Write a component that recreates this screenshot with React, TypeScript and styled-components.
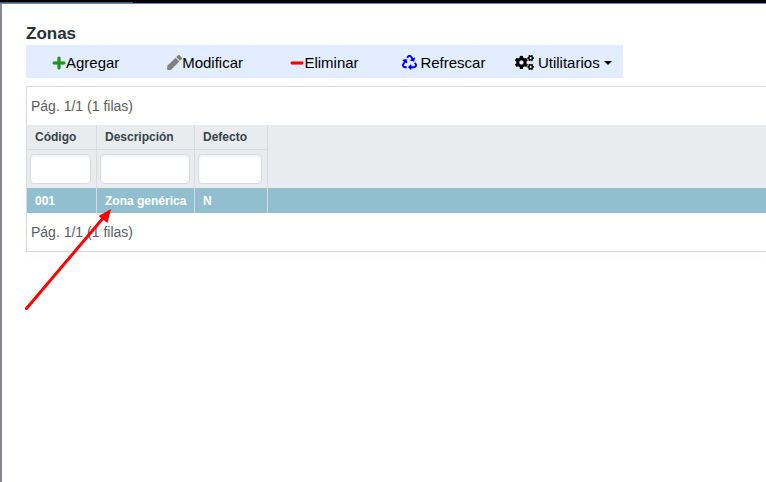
import React from "react";
import styled, { createGlobalStyle } from "styled-components";
import { FaPlus, FaPen, FaMinus, FaRecycle, FaCogs } from "react-icons/fa";

const GlobalStyle = createGlobalStyle`
  * { box-sizing: border-box; }
  body {
    margin: 0;
    background: #fff;
    font-family: "Liberation Sans", Arial, sans-serif;
    overflow-x: hidden;
  }
`;

const Frame = styled.div`
  min-height: 100vh;
  display: flex;
  flex-direction: column;
`;

const TopBar = styled.div`
  display: flex;
  align-items: flex-end;
  height: 4px;
  background: #000;
  border-bottom: 1px solid #5b87b5;
`;

const TopTab = styled.div`
  width: 133px;
  height: 1px;
  background: #555;
`;

const Page = styled.main`
  flex: 1;
  padding: 19px 0 0 24px;
  border-left: 2px solid #8a8494;
`;

const Title = styled.h1`
  margin: 0;
  font-size: 17px;
  line-height: 22px;
  font-weight: bold;
  color: #263238;
`;

const Toolbar = styled.nav`
  display: grid;
  grid-template-columns: repeat(5, 1fr);
  width: 100%;
  max-width: 597px;
  background: #e2eeff;
`;

const ToolButton = styled.button<{ $gap?: number }>`
  display: flex;
  align-items: center;
  justify-content: center;
  gap: ${(p) => p.$gap ?? 0}px;
  height: 33px;
  padding: 2px 0 0;
  border: 0;
  background: none;
  font: 15px "Liberation Sans", Arial, sans-serif;
  color: #000;
  white-space: nowrap;
`;

const Icon = styled.span<{ $color: string }>`
  display: flex;
  color: ${(p) => p.$color};
`;

const Panel = styled.section`
  margin-top: 8px;
  border: 1px solid #d8dcde;
  border-right: 0;
  box-shadow: 0 4px 12px rgba(0, 0, 0, 0.02);
`;

const Pager = styled.p`
  margin: 0;
  padding-left: 4px;
  font-size: 14px;
  line-height: 38px;
  color: #595d60;
`;

const Table = styled.table`
  width: 100%;
  table-layout: fixed;
  border-collapse: separate;
  border-spacing: 0;
  font-size: 12px;
`;

const Col = styled.col<{ $width?: number }>`
  width: ${(p) => (p.$width ? `${p.$width}px` : "auto")};
`;

const HeadRow = styled.tr`
  height: 25px;
  background: #e8ecef;
`;

const FilterRow = styled.tr`
  height: 38px;
  background: #e8ecef;
`;

const DataRow = styled.tr`
  height: 25px;
  background: #91bfd0;
`;

const HeadCell = styled.th`
  padding: 0 8px;
  border-right: 1px solid #d7dcdf;
  border-bottom: 1px solid #d7dcdf;
  text-align: left;
  color: #37434a;
`;

const FilterCell = styled.td<{ $right?: number }>`
  padding: 4px ${(p) => p.$right ?? 4}px 4px 3px;
  border-right: 1px solid #d7dcdf;
`;

const FilterInput = styled.input`
  display: block;
  width: 100%;
  height: 30px;
  padding: 0 6px;
  border: 1px solid #d7dcdf;
  border-radius: 4px;
  background: #fff;
  box-shadow: inset 0 2px 3px rgba(0, 0, 0, 0.05);
`;

const DataCell = styled.td`
  padding: 0 8px;
  border-right: 1px solid #d7dcdf;
  font-weight: bold;
  color: #fff;
  white-space: nowrap;
`;

const BlankCell = styled.td`
  padding: 0;
`;

const Arrow = styled.svg`
  position: absolute;
  left: 20px;
  top: 200px;
  pointer-events: none;
`;

export default function App() {
  return (
    <Frame>
      <GlobalStyle />
      <TopBar><TopTab /></TopBar>
      <Page>
        <Title>Zonas</Title>
        <Toolbar aria-label="Acciones">
          <ToolButton>
            <Icon $color="#1f941f">
              <FaPlus size={14} stroke="currentColor" strokeWidth={20} />
            </Icon>
            Agregar
          </ToolButton>
          <ToolButton>
            <Icon $color="#808080"><FaPen size={15} /></Icon>Modificar
          </ToolButton>
          <ToolButton>
            <Icon $color="#ff0000">
              <FaMinus size={14} stroke="currentColor" strokeWidth={20} />
            </Icon>
            Eliminar
          </ToolButton>
          <ToolButton $gap={3}>
            <Icon $color="#0000ff"><FaRecycle size={15} /></Icon>Refrescar
          </ToolButton>
          <ToolButton $gap={4} aria-haspopup="menu">
            <Icon $color="#000"><FaCogs size={19} /></Icon>Utilitarios
            <Icon $color="#000">
              <svg width="8" height="4" viewBox="0 0 8 4"><path d="M0 0h8L4 4z" fill="currentColor" /></svg>
            </Icon>
          </ToolButton>
        </Toolbar>
        <Panel>
          <Pager>Pág. 1/1 (1 filas)</Pager>
          <Table>
            <colgroup>
              <Col $width={70} />
              <Col $width={98} />
              <Col $width={73} />
              <Col />
            </colgroup>
            <thead>
              <HeadRow>
                <HeadCell>Código</HeadCell>
                <HeadCell>Descripción</HeadCell>
                <HeadCell>Defecto</HeadCell>
                <BlankCell />
              </HeadRow>
              <FilterRow>
                <FilterCell $right={5}><FilterInput aria-label="Código" /></FilterCell>
                <FilterCell><FilterInput aria-label="Descripción" /></FilterCell>
                <FilterCell $right={5}><FilterInput aria-label="Defecto" /></FilterCell>
                <BlankCell />
              </FilterRow>
            </thead>
            <tbody>
              <DataRow>
                <DataCell>001</DataCell>
                <DataCell>Zona genérica</DataCell>
                <DataCell>N</DataCell>
                <BlankCell />
              </DataRow>
            </tbody>
          </Table>
          <Pager>Pág. 1/1 (1 filas)</Pager>
        </Panel>
      </Page>
      <Arrow width="100" height="120" viewBox="20 200 100 120" aria-hidden="true">
        <path d="M26.500 308.500L104 217" stroke="#f00" strokeWidth="3" strokeLinecap="round" />
        <path d="M111 209L107.500 223L98.500 216Z" fill="#f00" />
      </Arrow>
    </Frame>
  );
}
